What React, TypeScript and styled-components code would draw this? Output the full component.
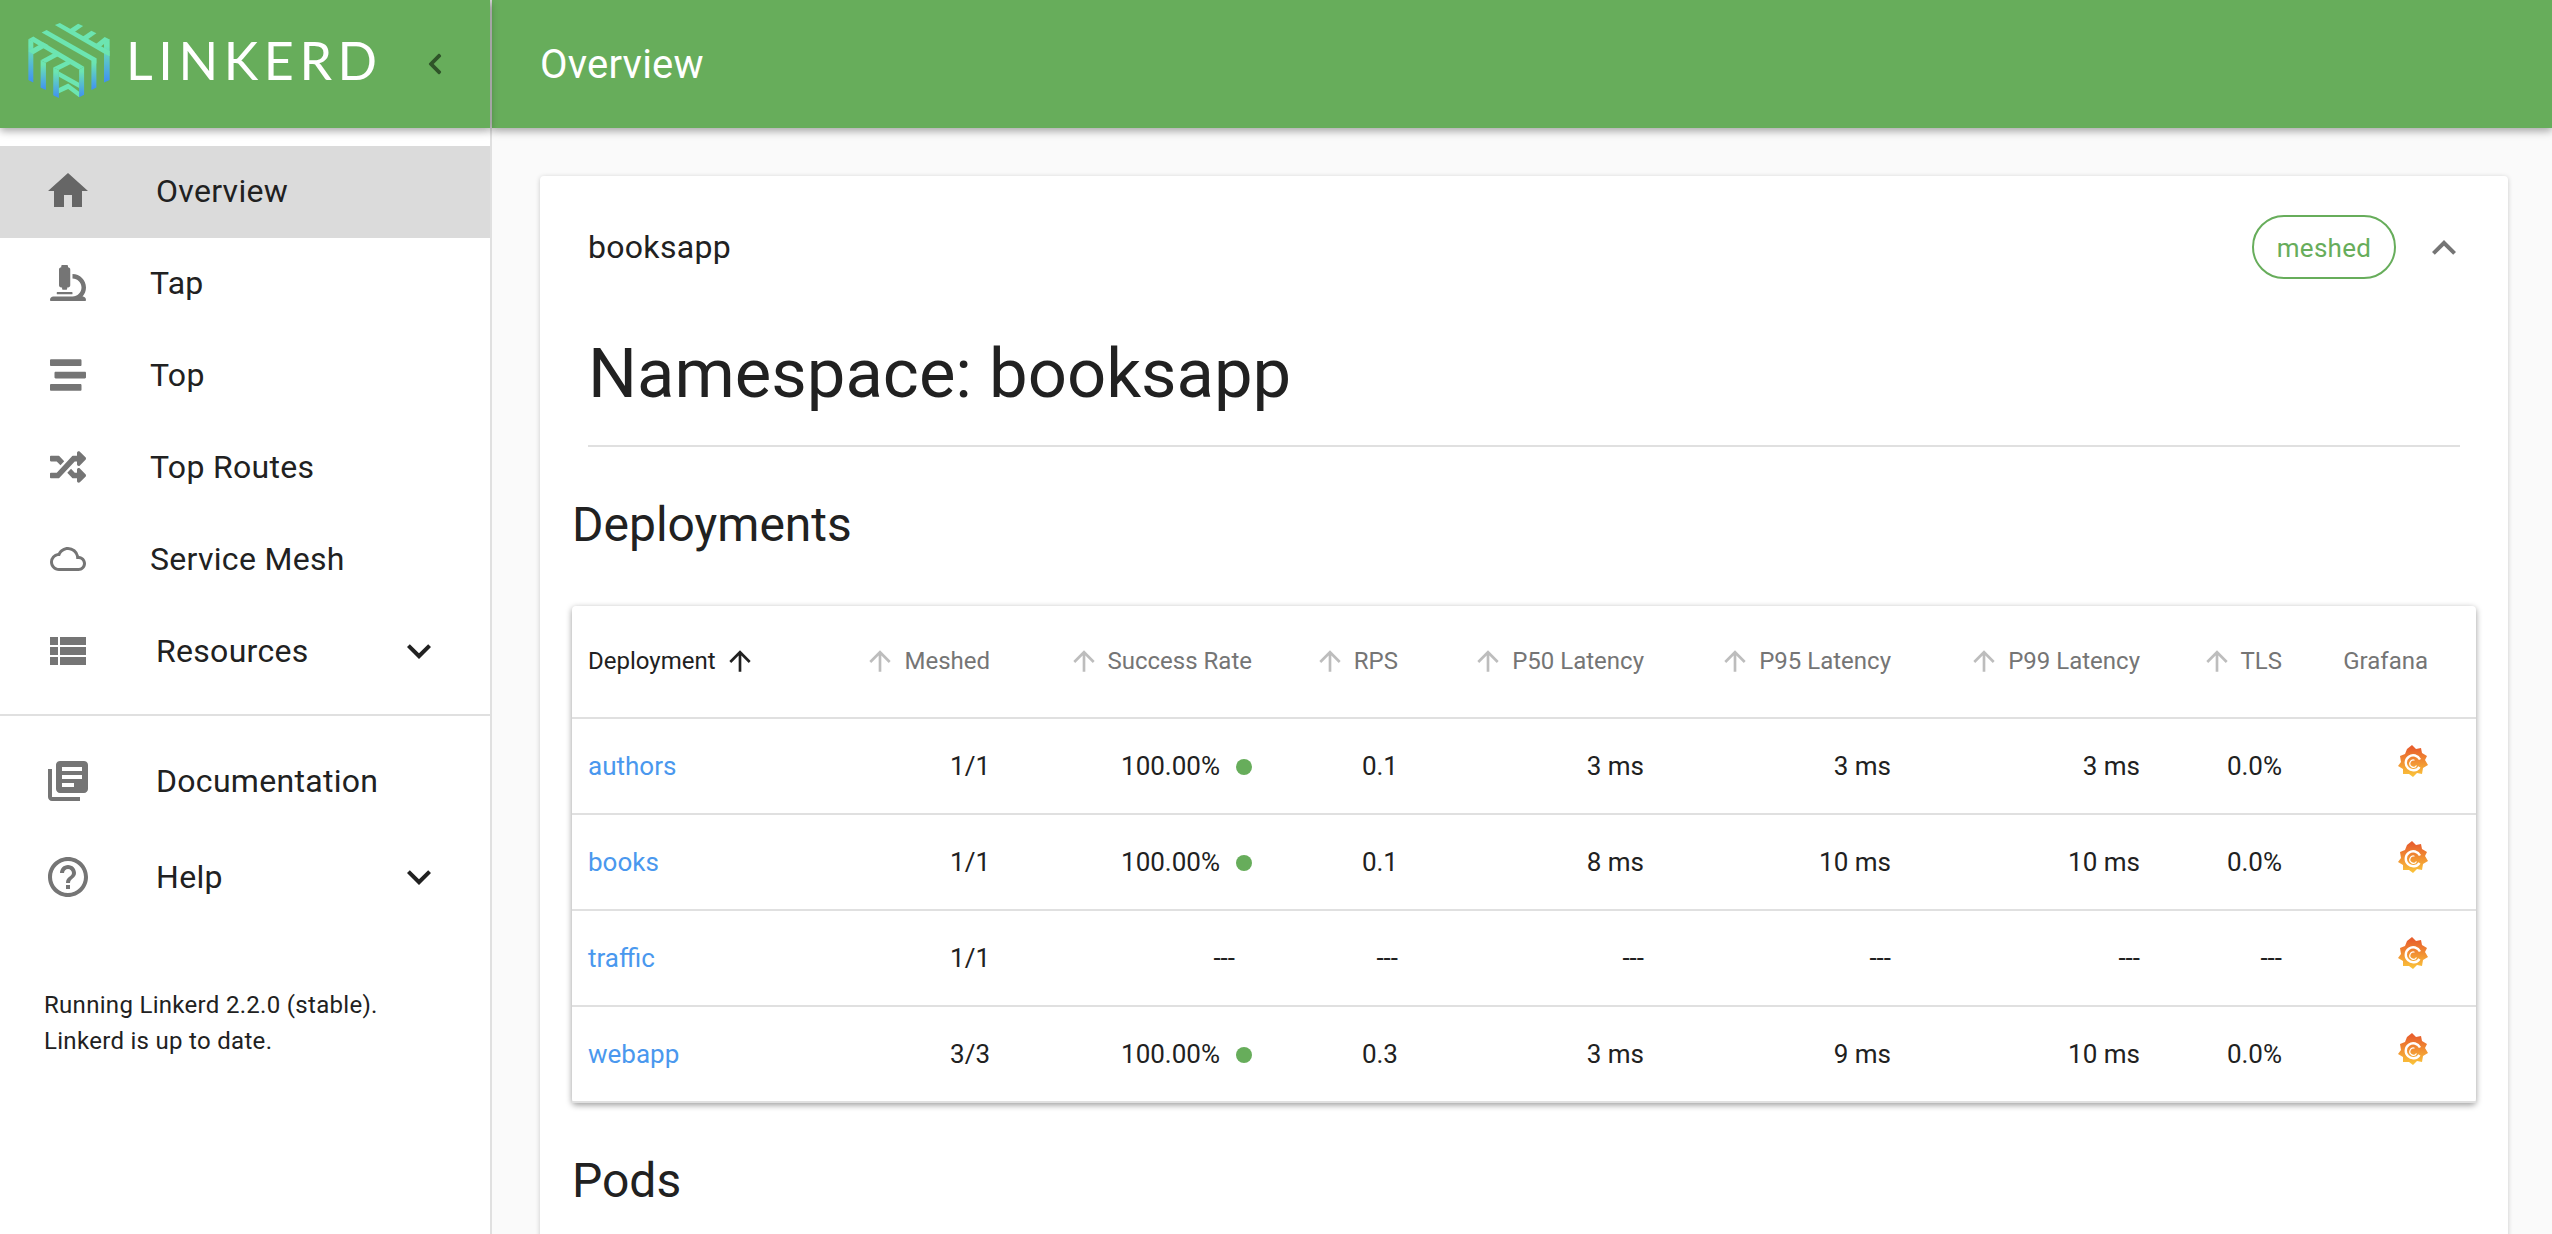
import React from "react";
import styled, { createGlobalStyle } from "styled-components";
import { FaChevronLeft, FaMicroscope, FaRandom, FaStream } from "react-icons/fa";
import {
  MdArrowUpward,
  MdCloudQueue,
  MdExpandLess,
  MdExpandMore,
  MdHelpOutline,
  MdHome,
  MdLibraryBooks,
  MdViewList,
} from "react-icons/md";

const GlobalStyle = createGlobalStyle`
  html, body {
    margin: 0;
    height: 100%;
    overflow: hidden;
    background: #fafafa;
    font-family: Roboto, "Liberation Sans", sans-serif;
    color: #212121;
  }
  * { box-sizing: border-box; }
`;

const Page = styled.div`
  display: flex;
  width: 2552px;
  height: 1234px;
  overflow: hidden;
`;

const Sidebar = styled.aside`
  flex: 0 0 492px;
  background: #fff;
  border-right: 2px solid #e0e0e0;
`;

const Brand = styled.div`
  position: relative;
  z-index: 1;
  display: flex;
  align-items: center;
  height: 128px;
  padding: 0 0 8px 28px;
  background: #67ad5b;
  box-shadow: 0 3px 8px rgba(0, 0, 0, 0.35);
`;

const LogoText = styled.span`
  margin-left: 16px;
  font-family: Lato, sans-serif;
  font-size: 52px;
  font-weight: 400;
  letter-spacing: 5.6px;
  color: #fff;
`;

const CollapseButton = styled.span`
  display: flex;
  margin: 8px 43px 0 auto;
  color: #2f5429;
`;

const NavList = styled.nav`
  padding: 18px 0 16px;
`;

const NavItem = styled.div<{ $active?: boolean; $tight?: boolean; $tall?: boolean }>`
  display: flex;
  align-items: center;
  height: ${(p) => (p.$tall ? "96px" : "92px")};
  padding-left: ${(p) => (p.$tight ? "50px" : "44px")};
  padding-right: 47px;
  padding-bottom: 2px;
  font-size: 32px;
  letter-spacing: 0.3px;
  background: ${(p) => (p.$active ? "#dbdbdb" : "transparent")};
`;

const NavIcon = styled.span<{ $tight?: boolean; $active?: boolean }>`
  display: flex;
  flex: 0 0 ${(p) => (p.$tight ? "100px" : "112px")};
  color: ${(p) => (p.$active ? "#666" : "#757575")};
`;

const NavCaret = styled.span`
  display: flex;
  margin-left: auto;
  color: #212121;
`;

const Divider = styled.hr`
  margin: 0;
  border: 0;
  border-top: 2px solid #e0e0e0;
`;

const VersionNote = styled.p`
  margin: 45px 0 0 44px;
  font-size: 24px;
  line-height: 36px;
  letter-spacing: 0.3px;
`;

const Main = styled.main`
  flex: 1;
  min-width: 0;
`;

const TopBar = styled.header`
  display: flex;
  align-items: center;
  height: 128px;
  padding-left: 48px;
  background: #67ad5b;
  box-shadow: 0 3px 8px rgba(0, 0, 0, 0.35);
  color: #fff;
  font-size: 40px;
  letter-spacing: 0.2px;
`;

const Card = styled.section`
  margin: 48px 44px 0 48px;
  padding: 0 48px 48px;
  height: 1200px;
  background: #fff;
  border-radius: 4px;
  box-shadow: 0 1px 5px rgba(0, 0, 0, 0.2);
`;

const CardHead = styled.div`
  display: flex;
  align-items: center;
  height: 142px;
  font-size: 32px;
  letter-spacing: 0.3px;
`;

const Chip = styled.span`
  display: flex;
  align-items: center;
  justify-content: center;
  width: 144px;
  height: 64px;
  margin-left: auto;
  margin-right: 24px;
  padding-top: 2px;
  border: 2px solid #67ad5b;
  border-radius: 32px;
  color: #67ad5b;
  font-size: 26px;
`;

const Toggle = styled.span`
  display: flex;
  margin: 1px -8px 0 0;
  color: #757575;
`;

const Heading = styled.h1`
  margin: 0;
  padding: 16px 0 31px;
  font-size: 68.8px;
  line-height: 80px;
  font-weight: 400;
  border-bottom: 2px solid #e0e0e0;
`;

const SectionTitle = styled.h2<{ $top: number }>`
  margin: ${(p) => p.$top}px -16px 0;
  font-size: 48px;
  line-height: 56px;
  font-weight: 400;
`;

const TablePaper = styled.div`
  margin: 53px -16px 0;
  background: #fff;
  border-radius: 4px;
  box-shadow: 0 2px 6px rgba(0, 0, 0, 0.4);
`;

const Table = styled.table`
  width: 100%;
  table-layout: fixed;
  border-collapse: collapse;
  font-size: 26px;
`;

const Th = styled.th<{ $w?: number; $left?: boolean; $sorted?: boolean }>`
  width: ${(p) => (p.$w ? `${p.$w}px` : "auto")};
  height: 112px;
  padding: 0 ${(p) => (p.$w === 194 ? "48px" : "0")} 2px ${(p) => (p.$left ? "16px" : "0")};
  text-align: ${(p) => (p.$left ? "left" : "right")};
  font-size: 24px;
  font-weight: 400;
  color: ${(p) => (p.$sorted ? "#212121" : "#757575")};
  border-bottom: 2px solid #e0e0e0;
`;

const HeadLabel = styled.span`
  display: inline-flex;
  align-items: center;
  vertical-align: middle;
  gap: 8px;
`;

const SortArrow = styled.span<{ $sorted?: boolean }>`
  display: flex;
  color: ${(p) => (p.$sorted ? "#212121" : "#bdbdbd")};
`;

const Td = styled.td<{ $left?: boolean; $last?: boolean; $inset?: boolean }>`
  height: 96px;
  padding: 0 ${(p) => (p.$last ? "48px" : p.$inset ? "17px" : "0")} 0 ${(p) => (p.$left ? "16px" : "0")};
  text-align: ${(p) => (p.$left ? "left" : "right")};
  border-bottom: 2px solid #e0e0e0;
`;

const RowLink = styled.a`
  color: #4a98ee;
  text-decoration: none;
`;

const StatusDot = styled.span`
  display: inline-block;
  width: 16px;
  height: 16px;
  margin-left: 16px;
  border-radius: 50%;
  background: #67ad5b;
`;

const GrafanaSlot = styled.span`
  display: inline-flex;
  vertical-align: middle;
  margin-bottom: 10px;
`;

const LinkerdLogo = () => (
  <svg width="82" height="75" viewBox="85 66 245 226">
    <defs>
      <linearGradient id="band" x1="0" y1="0" x2="0" y2="1">
        <stop offset="0.15" stopColor="#6ce5b1" />
        <stop offset="1" stopColor="#3f90f4" />
      </linearGradient>
    </defs>
    <g fill="url(#band)">
      <polygon points="85,115 100,122 100,245 85,238" />
      <polygon points="122,178 138,186 138,268 122,260" />
      <polygon points="160,200 177,208 177,292 160,284" />
      <polygon points="238,206 253,198 253,282 238,290" />
      <polygon points="275,180 290,172 290,260 275,268" />
      <polygon points="313,124 330,115 330,238 313,245" />
    </g>
    <g fill="#6ce5b1">
      <polygon points="165,72 180,66 330,150 330,166 313,158" />
      <polygon points="125,95 140,87 290,172 290,188 275,180" />
      <polygon points="85,115 100,107 253,198 238,206" />
      <polygon points="205,88 235,68 250,75 220,96" />
      <polygon points="245,110 275,89 290,97 260,118" />
      <polygon points="285,132 315,108 330,116 300,140" />
      <polygon points="85,150 130,125 146,133 100,160" />
      <polygon points="122,178 165,155 180,163 138,186" />
      <polygon points="160,200 205,178 220,186 177,208" />
      <polygon points="177,212 238,246 238,262 177,228" />
      <polygon points="177,262 205,248 238,273 238,290 205,265 177,278" />
    </g>
  </svg>
);

const GrafanaIcon = () => (
  <svg width="30" height="32" viewBox="4 3 30 32">
    <defs>
      <linearGradient id="graf" x1="0" y1="0" x2="0" y2="1">
        <stop offset="0.1" stopColor="#e8602d" />
        <stop offset="1" stopColor="#fbc53a" />
      </linearGradient>
    </defs>
    <polygon
      fill="url(#graf)"
      points="18,3 22,7 27,6 28,11 33,14 31,18 34,23 29,26 28,32 23,31 19,35 15,32 9,32 9,27 4,24 7,20 6,14 11,12 13,7"
    />
    <path d="M26 17.5A7.5 7.5 0 1 0 25.5 25" fill="none" stroke="#fff" strokeWidth="2.4" />
    <path d="M22.5 23.5A3.6 3.6 0 1 1 20.5 18.2" fill="none" stroke="#fff" strokeWidth="1.2" />
  </svg>
);

const navTop = [
  { label: "Overview", icon: <MdHome size={48} />, active: true },
  { label: "Tap", icon: <FaMicroscope size={36} />, tight: true },
  { label: "Top", icon: <FaStream size={36} />, tight: true },
  { label: "Top Routes", icon: <FaRandom size={36} />, tight: true },
  { label: "Service Mesh", icon: <MdCloudQueue size={36} />, tight: true },
  { label: "Resources", icon: <MdViewList size={48} />, caret: true },
];

const columns = [
  { name: "Meshed", w: 418 },
  { name: "Success Rate", w: 262 },
  { name: "RPS", w: 146 },
  { name: "P50 Latency", w: 246 },
  { name: "P95 Latency", w: 247 },
  { name: "P99 Latency", w: 249 },
  { name: "TLS", w: 142 },
];

const rows = [
  { name: "authors", meshed: "1/1", rate: "100.00%", rps: "0.1", p50: "3 ms", p95: "3 ms", p99: "3 ms", tls: "0.0%" },
  { name: "books", meshed: "1/1", rate: "100.00%", rps: "0.1", p50: "8 ms", p95: "10 ms", p99: "10 ms", tls: "0.0%" },
  { name: "traffic", meshed: "1/1", rate: "---", rps: "---", p50: "---", p95: "---", p99: "---", tls: "---" },
  { name: "webapp", meshed: "3/3", rate: "100.00%", rps: "0.3", p50: "3 ms", p95: "9 ms", p99: "10 ms", tls: "0.0%" },
];

const App: React.FC = () => (
  <Page>
    <GlobalStyle />
    <Sidebar>
      <Brand>
        <LinkerdLogo />
        <LogoText>LINKERD</LogoText>
        <CollapseButton>
          <FaChevronLeft size={24} />
        </CollapseButton>
      </Brand>
      <NavList>
        {navTop.map((item) => (
          <NavItem key={item.label} $active={item.active} $tight={item.tight}>
            <NavIcon $tight={item.tight} $active={item.active}>
              {item.icon}
            </NavIcon>
            {item.label}
            {item.caret && (
              <NavCaret>
                <MdExpandMore size={48} />
              </NavCaret>
            )}
          </NavItem>
        ))}
      </NavList>
      <Divider />
      <NavList>
        <NavItem $tall>
          <NavIcon>
            <MdLibraryBooks size={48} />
          </NavIcon>
          Documentation
        </NavItem>
        <NavItem $tall>
          <NavIcon>
            <MdHelpOutline size={48} />
          </NavIcon>
          Help
          <NavCaret>
            <MdExpandMore size={48} />
          </NavCaret>
        </NavItem>
      </NavList>
      <VersionNote>
        Running Linkerd 2.2.0 (stable).
        <br />
        Linkerd is up to date.
      </VersionNote>
    </Sidebar>
    <Main>
      <TopBar>Overview</TopBar>
      <Card>
        <CardHead>
          booksapp
          <Chip>meshed</Chip>
          <Toggle>
            <MdExpandLess size={48} />
          </Toggle>
        </CardHead>
        <Heading>Namespace: booksapp</Heading>
        <SectionTitle $top={50}>Deployments</SectionTitle>
        <TablePaper>
          <Table>
            <thead>
              <tr>
                <Th $left $sorted $w={0}>
                  <HeadLabel>
                    Deployment
                    <SortArrow $sorted>
                      <MdArrowUpward size={32} />
                    </SortArrow>
                  </HeadLabel>
                </Th>
                {columns.map((c) => (
                  <Th key={c.name} $w={c.w === 418 ? 0 : c.w}>
                    <HeadLabel>
                      <SortArrow>
                        <MdArrowUpward size={32} />
                      </SortArrow>
                      {c.name}
                    </HeadLabel>
                  </Th>
                ))}
                <Th $w={194}>Grafana</Th>
              </tr>
            </thead>
            <tbody>
              {rows.map((r) => (
                <tr key={r.name}>
                  <Td $left>
                    <RowLink href="#">{r.name}</RowLink>
                  </Td>
                  <Td>{r.meshed}</Td>
                  <Td $inset={r.rate === "---"}>
                    {r.rate}
                    {r.rate !== "---" && <StatusDot />}
                  </Td>
                  <Td>{r.rps}</Td>
                  <Td>{r.p50}</Td>
                  <Td>{r.p95}</Td>
                  <Td>{r.p99}</Td>
                  <Td>{r.tls}</Td>
                  <Td $last>
                    <GrafanaSlot>
                      <GrafanaIcon />
                    </GrafanaSlot>
                  </Td>
                </tr>
              ))}
            </tbody>
          </Table>
        </TablePaper>
        <SectionTitle $top={50}>Pods</SectionTitle>
      </Card>
    </Main>
  </Page>
);

export default App;
